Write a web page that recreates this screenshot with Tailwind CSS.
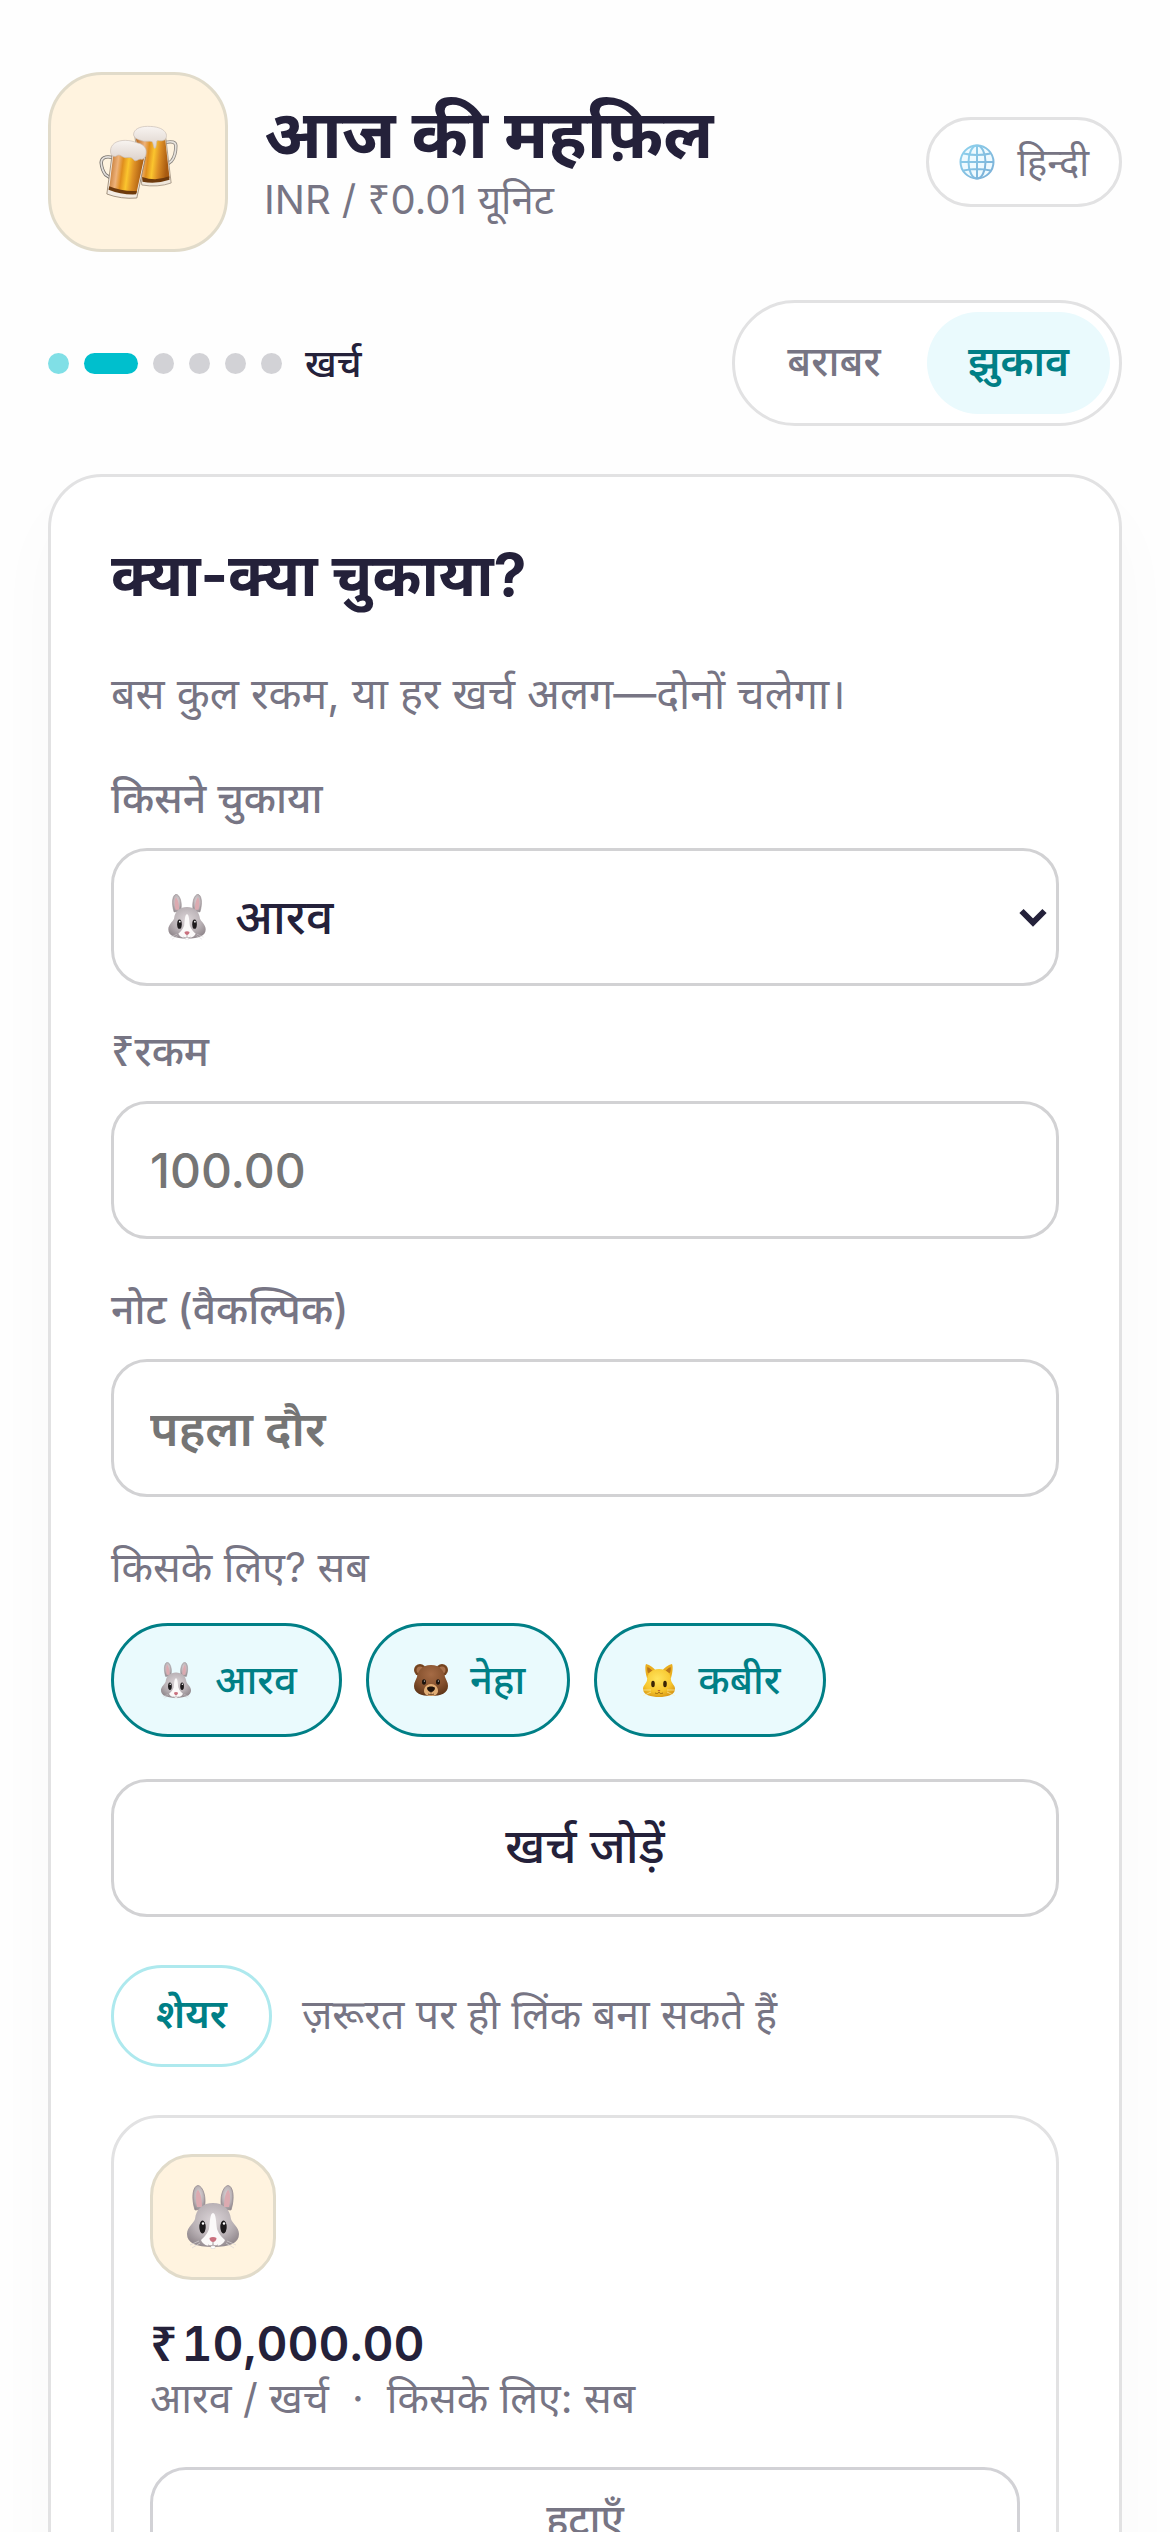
<!DOCTYPE html>
<html lang="hi">
<head>
<meta charset="utf-8">
<meta name="viewport" content="width=device-width, initial-scale=1">
<title>आज की महफ़िल</title>
<script src="https://cdn.jsdelivr.net/npm/@tailwindcss/browser@4"></script>
</head>
<body class="bg-[#fefefe] font-[Inter,'Noto_Sans_Devanagari','Noto_Sans',sans-serif] text-[41px] leading-[58px] text-[#777584]">

<!-- Shared emoji artwork -->
<svg width="0" height="0" class="absolute" aria-hidden="true">
  <defs>
    <radialGradient id="fur" cx=".5" cy=".4" r=".65"><stop offset="0" stop-color="#dcd5d8"/><stop offset=".6" stop-color="#b9b1b5"/><stop offset="1" stop-color="#8f868b"/></radialGradient>
    <radialGradient id="brown" cx=".5" cy=".3" r=".75"><stop offset="0" stop-color="#a56b45"/><stop offset=".6" stop-color="#84502d"/><stop offset="1" stop-color="#5b3216"/></radialGradient>
    <radialGradient id="gold" cx=".45" cy=".35" r=".75"><stop offset="0" stop-color="#ffe45c"/><stop offset=".6" stop-color="#f7c62e"/><stop offset="1" stop-color="#d18d10"/></radialGradient>
    <linearGradient id="ale" x1="0" x2="1" y1="0" y2=".15"><stop offset="0" stop-color="#b5661c"/><stop offset=".28" stop-color="#eeb27a"/><stop offset=".42" stop-color="#e08e1d"/><stop offset=".58" stop-color="#fbc52e"/><stop offset=".75" stop-color="#dd8f25"/><stop offset="1" stop-color="#a85a10"/></linearGradient>
    <linearGradient id="foam" x1="0" x2="0" y1="0" y2="1"><stop offset="0" stop-color="#f8f4f1"/><stop offset="1" stop-color="#ddd2cb"/></linearGradient>
    <linearGradient id="sky" x1="0" x2="1" y1="0" y2="1"><stop offset="0" stop-color="#8fd3ee"/><stop offset="1" stop-color="#7aaed6"/></linearGradient>
  </defs>
  <symbol id="rabbit" viewBox="0 0 54 64">
    <path d="M9 25C5 12 7 1 12 .5 17 1 21 13 18 24z" fill="url(#fur)" stroke="#958b90" stroke-width=".8"/>
    <path d="M11 22C9 12 10 6 12 5c3 3 4 11 4 17z" fill="#dcaab0"/>
    <path d="M45 25C49 12 47 1 42 .5 37 1 33 13 36 24z" fill="url(#fur)" stroke="#958b90" stroke-width=".8"/>
    <path d="M43 22c2-10 1-16-1-17-3 3-4 11-4 17z" fill="#dcaab0"/>
    <path d="M27 18c10 0 17 6 18 16 1 4 8 8 8 15 0 9-9 13-26 13S1 58 1 49c0-7 7-11 8-15 1-10 8-16 18-16z" fill="url(#fur)"/>
    <path d="M27 28c3 0 3 9 4 16 2 6 6 9 8 11-2 5-6 6-12 6s-10-1-12-6c2-2 6-5 8-11 1-7 1-16 4-16z" fill="#fbf9f9"/>
    <ellipse cx="16.500" cy="42" rx="3.200" ry="6.500" fill="#1d1a1c"/><ellipse cx="37.500" cy="42" rx="3.200" ry="6.500" fill="#1d1a1c"/>
    <circle cx="17" cy="38.500" r="1.200" fill="#fff"/><circle cx="38" cy="38.500" r="1.200" fill="#fff"/>
    <path d="M23.500 53c2-1.500 5-1.500 7 0 0 2.500-2 4-3.500 4s-3.500-1.500-3.500-4z" fill="#c9707e"/>
    <path d="M27 57v3M22 60c2 1 4 1 5 0 1 1 3 1 5 0" fill="none" stroke="#9c8f93" stroke-width=".9"/>
    <path d="M25 61h4v2.500h-4z" fill="#fff" stroke="#ccc" stroke-width=".4"/>
    <path d="M13 56 4 60M14 58l-8 5M41 56l9 4M40 58l8 5" stroke="#d9d4d6" stroke-width=".7"/>
  </symbol>
  <symbol id="bear" viewBox="0 0 36 34">
    <circle cx="7" cy="7" r="6" fill="#74431f"/><circle cx="7" cy="7" r="3.500" fill="#a9714c"/>
    <circle cx="29" cy="7" r="6" fill="#74431f"/><circle cx="29" cy="7" r="3.500" fill="#a9714c"/>
    <path d="M18 2c9 0 13 6 14 12 1 3 3 5 3 9 0 7-7 10-17 10S1 30 1 23c0-4 2-6 3-9C5 8 9 2 18 2z" fill="url(#brown)"/>
    <path d="M18 21c4 0 7 3 7 7 0 3-3 5-7 5s-7-2-7-5c0-4 3-7 7-7z" fill="#e0ac74"/>
    <path d="M14 25c1-2 7-2 8 0 0 2-2 4-4 4s-4-2-4-4z" fill="#1f120b"/>
    <path d="M18 29v1.500M15 31c2 1 4 1 6 0" fill="none" stroke="#4a2a14" stroke-width=".8"/>
    <ellipse cx="11" cy="19" rx="2" ry="2.800" fill="#1b120c"/><ellipse cx="25" cy="19" rx="2" ry="2.800" fill="#1b120c"/>
    <circle cx="11.400" cy="18" r=".6" fill="#fff"/><circle cx="25.400" cy="18" r=".6" fill="#fff"/>
  </symbol>
  <symbol id="cat" viewBox="0 0 34 35">
    <path d="M5 15C3 8 3 3 4 1c4 1 8 4 10 7h6c2-3 6-6 10-7 1 2 1 7-1 14z" fill="#eaae1f"/>
    <path d="M6 10C5 7 5 5 5.500 4 8 5 10 7 11 9zM28 10c1-3 1-5 .5-6C26 5 24 7 23 9z" fill="#b8741a"/>
    <path d="M17 6c8 0 12 5 12 11 0 3 4 5 4 9 0 6-8 8-16 8S1 32 1 26c0-4 4-6 4-9C5 11 9 6 17 6z" fill="url(#gold)"/>
    <ellipse cx="11" cy="21" rx="1.800" ry="3.200" fill="#3b2506"/><ellipse cx="23" cy="21" rx="1.800" ry="3.200" fill="#3b2506"/>
    <path d="M15.500 27h3L17 28.800z" fill="#c2622f"/>
    <path d="M13 30c2 1 3.500.5 4-1 .5 1.500 2 2 4 1" fill="none" stroke="#8f5c0d" stroke-width=".8"/>
    <path d="M9 29 1 33M25 29l8 4M9 27l-8 0M25 27h8" stroke="#fff3b8" stroke-width=".6"/>
  </symbol>
</svg>

<main class="flex flex-col px-12 pt-[72px]">
  <header class="flex items-center gap-9">
    <div class="flex size-[180px] shrink-0 items-center justify-center rounded-[54px] border-3 border-[#e1dbca] bg-[#fff3df]">
      <svg class="h-[74px] w-[79px]" viewBox="27 192 236 222" role="img" aria-label="बीयर">
        <path d="M226 244q30-6 31 10 0 30-13 46l-13 10" fill="none" stroke="#8d8781" stroke-width="10"/>
        <path d="M226 244q30-6 31 10 0 30-13 46l-13 10" fill="none" stroke="#e6e2dc" stroke-width="5"/>
        <path d="M134 226l93 6 16 134q-40 14-88 6z" fill="#efe6da" stroke="#8c7c6a" stroke-width="2"/>
        <path d="M137 230l88 4 13 116q-36 14-82 6z" fill="url(#ale)"/>
        <path d="M156 348q42 14 81-2l1 10q-40 14-81 6z" fill="#6e3a0c"/>
        <path d="M130 222c0-18 20-26 42-26 28 0 44 6 52 16 8 8 6 24-4 26-8 4-16-2-20 2-2 10-2 22-6 22s-4-14-8-20c-12-4-22 2-34-4-10-2-20-8-22-16z" fill="url(#foam)" stroke="#c9bdb4" stroke-width="2"/>
        <path d="M66 289q-32-6-33 16 2 22 13 36l18 12" fill="none" stroke="#77726e" stroke-width="10"/>
        <path d="M66 289q-32-6-33 16 2 22 13 36l18 12" fill="none" stroke="#e3dfdb" stroke-width="5"/>
        <path d="M67 272l99 16-26 123q-48 4-90-12z" fill="#f3ebe2" stroke="#7a6652" stroke-width="2"/>
        <path d="M70 276l92 14-23 106q-42 2-82-12z" fill="url(#ale)"/>
        <path d="M57 376q38 16 83 14l-2 10q-44 2-83-14z" fill="#6e3a0c"/>
        <path d="M61 270c0-20 18-32 44-32 16 0 26 4 38 8 18 4 26 16 25 28 0 16-10 24-18 20-8 2-12 8-18 4-8-12-16-8-26-8-12-2-10-6-20-8-6 0-8 6-14 4-8 0-11-8-11-16z" fill="url(#foam)" stroke="#c9bdb4" stroke-width="2"/>
      </svg>
    </div>
    <div class="min-w-0 flex-1">
      <h1 class="text-[68px] leading-[74px] font-bold text-[#24213a]">आज की महफ़िल</h1>
      <p class="text-[40px]">INR / <span class="font-['Noto_Sans']">₹</span>0.01 यूनिट</p>
    </div>
    <button type="button" class="flex h-[90px] items-center gap-[22px] rounded-full border-3 border-[#e2e2e3] bg-white px-[30px] text-[38px] leading-none">
      <svg class="size-9" viewBox="0 0 36 36" fill="none" stroke="url(#sky)" stroke-width="2" aria-hidden="true">
        <circle cx="18" cy="18" r="16.500" fill="#eefaff"/><ellipse cx="18" cy="18" rx="8.500" ry="16.500"/>
        <path d="M18 1.500l.01 33M1.500 18l33 .01M4.500 9.500q13.500 3 27 0M4.500 26.500q13.500-3 27 0"/>
      </svg>
      हिन्दी
    </button>
  </header>

  <div class="mt-12 flex items-center justify-between">
    <div class="flex items-center gap-[15px] text-[38px] font-medium text-[#24213a]">
      <span class="size-[21px] rounded-full bg-[#80dfe6]"></span>
      <span class="h-[21px] w-[54px] rounded-full bg-[#00bfcd]"></span>
      <span class="size-[21px] rounded-full bg-[#d2d2d6]"></span>
      <span class="size-[21px] rounded-full bg-[#d2d2d6]"></span>
      <span class="size-[21px] rounded-full bg-[#d2d2d6]"></span>
      <span class="size-[21px] rounded-full bg-[#d2d2d6]"></span>
      <span class="ml-2">खर्च</span>
    </div>
    <div class="flex h-[126px] gap-[3px] rounded-full border-3 border-[#e2e2e3] bg-white p-[9px]">
      <button type="button" class="w-[180px] rounded-full pb-1 font-medium">बराबर</button>
      <button type="button" class="w-[183px] rounded-full bg-[#eafafd] pb-1 font-semibold text-[#007f86]">झुकाव</button>
    </div>
  </div>

  <section class="mt-12 flex flex-col rounded-[54px] border-3 border-[#e2e2e3] bg-white p-[60px] shadow-[0_36px_72px_rgba(0,0,0,0.025)]">
    <h2 class="text-[59px] leading-[76px] font-bold text-[#24213a]">क्या-क्या चुकाया?</h2>
    <p class="mt-12 text-[43px] leading-[64px]">बस कुल रकम, या हर खर्च अलग—दोनों चलेगा।</p>

    <label for="payer" class="mt-11 font-medium">किसने चुकाया</label>
    <div class="relative mt-[21px]">
      <select id="payer" class="block h-[138px] w-full appearance-none rounded-[36px] border-3 border-[#d2d2d4] bg-white pl-[121px] text-[48px] font-medium text-[#24213a]">
        <option>आरव</option><option>नेहा</option><option>कबीर</option>
      </select>
      <svg class="pointer-events-none absolute top-[46px] left-14 h-[46px] w-10" aria-hidden="true"><use href="#rabbit"/></svg>
      <svg class="pointer-events-none absolute top-[58px] right-3 h-6 w-7" viewBox="0 0 28 24" fill="none" stroke="#24213a" stroke-width="6" aria-hidden="true"><path d="M2.500 5 14 16.500 25.500 5"/></svg>
    </div>

    <label for="amount" class="mt-[35px] font-medium"><span class="font-['Noto_Sans']">₹</span>रकम</label>
    <input id="amount" type="text" inputmode="decimal" placeholder="100.00" class="mt-[21px] h-[138px] w-full rounded-[36px] border-3 border-[#d2d2d4] bg-white px-9 text-[48px] font-medium text-[#24213a] placeholder:text-[#757575]">

    <label for="note" class="mt-[41px] font-medium">नोट (वैकल्पिक)</label>
    <input id="note" type="text" placeholder="पहला दौर" class="mt-[21px] h-[138px] w-full rounded-[36px] border-3 border-[#d2d2d4] bg-white px-9 text-[48px] font-semibold text-[#24213a] placeholder:text-[#757575]">

    <p class="mt-[41px]">किसके लिए? सब</p>
    <div class="mt-[27px] flex flex-wrap gap-6 text-[40px] font-medium text-[#007f86]">
      <button type="button" class="flex h-[114px] items-center gap-[19px] rounded-full border-3 border-[#007f86] bg-[#eafafd] px-[42px]"><svg class="h-[37px] w-10" aria-hidden="true"><use href="#rabbit"/></svg>आरव</button>
      <button type="button" class="flex h-[114px] items-center gap-[19px] rounded-full border-3 border-[#007f86] bg-[#eafafd] px-[42px]"><svg class="h-[34px] w-10" aria-hidden="true"><use href="#bear"/></svg>नेहा</button>
      <button type="button" class="flex h-[114px] items-center gap-[19px] rounded-full border-3 border-[#007f86] bg-[#eafafd] px-[42px]"><svg class="h-[35px] w-10" aria-hidden="true"><use href="#cat"/></svg>कबीर</button>
    </div>

    <button type="button" class="mt-[42px] h-[138px] rounded-[36px] border-3 border-[#d2d2d4] bg-white pb-1 text-[48px] font-medium text-[#24213a]">खर्च जोड़ें</button>

    <div class="mt-12 flex items-center gap-[30px]">
      <button type="button" class="h-[102px] shrink-0 rounded-full border-3 border-[#aee9ee] bg-white px-[42px] pb-1 text-[40px] font-semibold text-[#007f86]">शेयर</button>
      <p class="pb-1">ज़रूरत पर ही लिंक बना सकते हैं</p>
    </div>

    <article class="mt-12 flex flex-col rounded-[48px] border-3 border-[#e2e2e3] bg-white p-9">
      <div class="flex size-[126px] items-center justify-center rounded-[42px] border-3 border-[#e1dbca] bg-[#fff3df]">
        <svg class="h-16 w-[54px]" role="img" aria-label="खरगोश"><use href="#rabbit"/></svg>
      </div>
      <h3 class="mt-9 text-[48px] leading-[54px] font-semibold text-[#24213a] tabular-nums"><span class="mr-1 font-['Noto_Sans']">₹</span>10,000.00</h3>
      <p class="leading-[54px] whitespace-pre-wrap">आरव / खर्च  ·  किसके लिए: सब</p>
      <button type="button" class="mt-[42px] h-[108px] rounded-[36px] border-3 border-[#d2d2d6] bg-white pb-1 font-medium">हटाएँ</button>
    </article>
  </section>
</main>
</body>
</html>
